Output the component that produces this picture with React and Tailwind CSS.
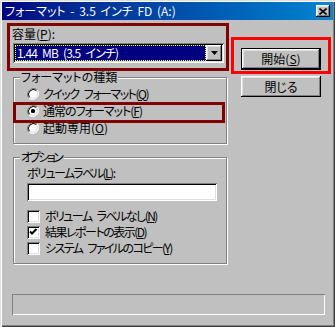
const sunken =
  'shadow-[inset_1px_1px_0_#808080,inset_-1px_-1px_0_#ffffff,inset_2px_2px_0_#000000,inset_-2px_-2px_0_#dfdfdf]';
const raised =
  'shadow-[inset_-1px_-1px_0_#000000,inset_1px_1px_0_#ffffff,inset_-2px_-2px_0_#808080,inset_2px_2px_0_#dfdfdf]';

const Radio = ({ checked }) => (
  <svg width="12" height="12" viewBox="0 0 12 12" className="shrink-0">
    <circle cx="6" cy="6" r="5" fill="#fff" />
    <path d="M10.2 1.8 A6 6 0 0 0 1.8 10.2" stroke="#808080" strokeWidth="1" fill="none" />
    <path d="M1.8 10.2 A6 6 0 0 0 10.2 1.8" stroke="#fff" strokeWidth="1" fill="none" />
    <path d="M9.5 2.5 A5 5 0 0 0 2.5 9.5" stroke="#000" strokeWidth="1" fill="none" />
    <path d="M2.5 9.5 A5 5 0 0 0 9.5 2.5" stroke="#dfdfdf" strokeWidth="1" fill="none" />
    {checked && <rect x="4" y="4" width="4" height="4" rx="1.5" fill="#000" />}
  </svg>
);

const Check = ({ checked }) => (
  <div className={`w-[13px] h-[13px] bg-white shrink-0 relative ${sunken}`}>
    {checked && (
      <svg width="13" height="13" viewBox="0 0 13 13" className="absolute inset-0">
        <polyline points="3,5.5 5,7.5 9.5,3" stroke="#000" strokeWidth="2" fill="none" />
      </svg>
    )}
  </div>
);

const Group = ({ label, labelClass = '', className, children }) => (
  <div className={`relative border border-[#808080] shadow-[1px_1px_0_#ffffff,inset_1px_1px_0_#ffffff] ${className}`}>
    <span className={`absolute -top-[8px] left-[6px] bg-[#c0c0c0] px-[1px] leading-[14px] ${labelClass}`}>{label}</span>
    {children}
  </div>
);

const radios = [
  ['クイック フォーマット', 'Q', false, 'tracking-[-1.5px] [word-spacing:4px]'],
  ['通常のフォーマット', 'F', true, 'tracking-[-1px]'],
  ['起動専用', 'O', false, ''],
];

const checks = [
  ['ボリューム ラベルなし', 'N', false, 'tracking-[-1.55px] [word-spacing:4px]'],
  ['結果レポートの表示', 'D', true, 'tracking-[-1.5px]'],
  ['システム ファイルのコピー', 'Y', false, 'tracking-[-1.6px] [word-spacing:4px]'],
];

export default function App() {
  return (
    <div
      className="relative w-[335px] h-[327px] bg-[#c0c0c0] overflow-hidden text-[12px] text-black font-['Noto_Sans_CJK_JP',sans-serif] [font-feature-settings:'palt'] shadow-[inset_1px_1px_0_#dfdfdf,inset_2px_2px_0_#ffffff,inset_-1px_-1px_0_#404040,inset_-2px_-2px_0_#808080]"
    >
      {/* title bar */}
      <div className="mx-[2px] mt-[2px] h-[18px] flex items-center bg-gradient-to-r from-[#000080] to-[#1084d0] text-white">
        <span className="ml-[3px] leading-[18px] [word-spacing:2px]">フォーマット - 3.5 インチ FD (A:)</span>
        <div className={`ml-auto mr-[3px] w-[14px] h-[12px] bg-[#c0c0c0] flex items-center justify-center ${raised}`}>
          <svg width="8" height="7" viewBox="0 0 8 7">
            <path d="M0.5 0.5 L7.5 6.5 M7.5 0.5 L0.5 6.5" stroke="#000" strokeWidth="1.6" />
          </svg>
        </div>
      </div>

      <div className="flex">
        {/* left column */}
        <div className="ml-[13px] w-[214px] flex flex-col">
          <div className="mt-[6px] -ml-[1px] h-[16px] leading-[16px]">
            容量(<u>P</u>):
          </div>
          <div className={`mt-[1px] w-[211px] h-[20px] bg-white flex p-[2px] ${sunken}`}>
            <div className="flex-1 bg-[#000080] border border-dotted border-[#ffff00] text-white leading-[14px] pl-[1px] tracking-[-0.8px] [word-spacing:3px]">
              1.44 MB (3.5 インチ)
            </div>
            <div className={`w-[16px] bg-[#c0c0c0] flex items-center justify-center ${raised}`}>
              <svg width="7" height="4" viewBox="0 0 7 4">
                <path d="M0 0 H7 L3.5 4 Z" fill="#000" />
              </svg>
            </div>
          </div>

          <Group label="フォーマットの種類" className="mt-[14px] h-[67px]">
            <div className="pt-[7px] pl-[13px] flex flex-col">
              {radios.map(([t, k, c, tr]) => (
                <div key={k} className="h-[17px] flex items-center gap-[4px]">
                  <Radio checked={c} />
                  <span className={`leading-[17px] ${tr}`}>
                    {t}(<u>{k}</u>)
                  </span>
                </div>
              ))}
            </div>
          </Group>

          <Group label="オプション" labelClass="tracking-[-2.5px] pr-[3px]" className="mt-[13px] h-[107px]">
            <div className="pt-[7px] pl-[13px] flex flex-col">
              <div className="h-[15px] leading-[15px] tracking-[-1.5px]">
                ボリュームラベル(<u>L</u>):
              </div>
              <div className={`mt-[3px] w-[190px] h-[18px] bg-white ${sunken}`} />
              <div className="mt-[7px] flex flex-col">
                {checks.map(([t, k, c, tr]) => (
                  <div key={k} className="h-[16px] flex items-center gap-[5px]">
                    <Check checked={c} />
                    <span className={`leading-[16px] ${tr}`}>
                      {t}(<u>{k}</u>)
                    </span>
                  </div>
                ))}
              </div>
            </div>
          </Group>
        </div>

        {/* right column */}
        <div className="ml-[14px] w-[80px] flex flex-col">
          <div className="mt-[28px] h-[22px] border border-black">
            <div className={`h-full bg-[#c0c0c0] flex items-center justify-center ${raised}`}>
              <span className="leading-[14px]">
                開始(<u>S</u>)
              </span>
            </div>
          </div>
          <div className={`mt-[6px] h-[21px] bg-[#c0c0c0] flex items-center justify-center ${raised}`}>
            <span className="leading-[14px]">閉じる</span>
          </div>
        </div>
      </div>

      {/* progress */}
      <div className="ml-[12px] mt-[30px] w-[313px] h-[21px] shadow-[inset_1px_1px_0_#808080,inset_-1px_-1px_0_#ffffff]" />

      {/* annotation boxes */}
      <div className="absolute left-[7px] top-[23px] w-[222px] h-[48px] border-[3px] border-[#800000]" />
      <div className="absolute left-[13px] top-[102px] w-[212px] h-[21px] border-[3px] border-[#800000]" />
      <div className="absolute left-[231px] top-[37px] w-[100px] h-[37px] border-[3px] border-[#ff0000]" />
    </div>
  );
}
